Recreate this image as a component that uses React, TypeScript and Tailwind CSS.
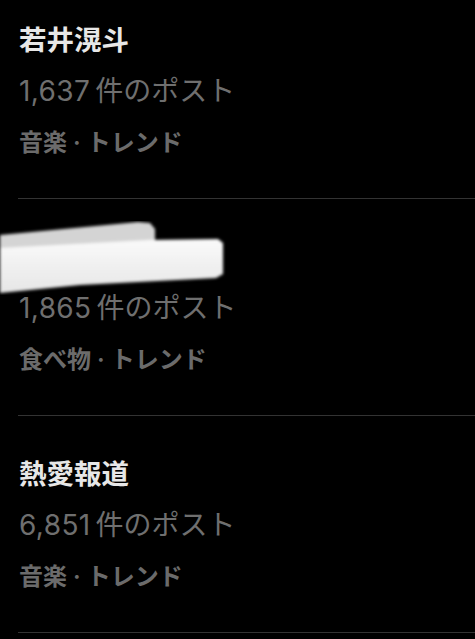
const items = [
    { title: '若井滉斗', count: '1,637', category: '音楽' },
    { title: '', count: '1,865', category: '食べ物', hidden: true },
    { title: '熱愛報道', count: '6,851', category: '音楽' },
]

function Scribble() {
    return (
        <svg className="absolute left-[-18px] top-[-11px]" width="226" height="74" viewBox="0 0 226 74">
            <defs>
                <filter id="soft" x="-5%" y="-10%" width="110%" height="120%">
                    <feGaussianBlur stdDeviation="1.5" />
                </filter>
                <linearGradient id="lower" x1="0" y1="0" x2="0" y2="1">
                    <stop offset="0" stopColor="#fafafa" />
                    <stop offset="1" stopColor="#e6e6e6" />
                </linearGradient>
            </defs>
            <g filter="url(#soft)">
                <path d="M0 14 L138 1 L150 2 L155 8 L155 23 L0 33 Z" fill="#d4d4d4" />
                <path d="M0 27 L150 19 L218 18 L223 22 L223 53 L216 57 L80 64 L0 72 Z" fill="url(#lower)" />
            </g>
        </svg>
    )
}

export default function App() {
    return (
        <div className="min-h-screen w-[475px] bg-black font-['Inter','Noto_Sans_CJK_JP',sans-serif]">
            {items.map((item, i) => (
                <div
                    key={i}
                    className={`ml-[18px] border-b border-[#333333] pb-[30px] ${i === 0 ? 'pt-[15px]' : 'pt-[33px]'}`}
                >
                    <div className="relative h-[51px] text-[27.5px] leading-[51px] font-bold text-[#e7e7e7] pl-[1px]">
                        {item.hidden ? <Scribble /> : item.title}
                    </div>
                    <div className="text-[28px] leading-[51px] text-[#6f6f6f] pl-[1px]">
                        <span className="mr-[5px] tracking-[0.4px]">{item.count}</span>件のポスト
                    </div>
                    <div className="text-[24px] leading-[51px] font-semibold text-[#6b6b6b] pl-[1px]">
                        {item.category} · トレンド
                    </div>
                </div>
            ))}
        </div>
    )
}
